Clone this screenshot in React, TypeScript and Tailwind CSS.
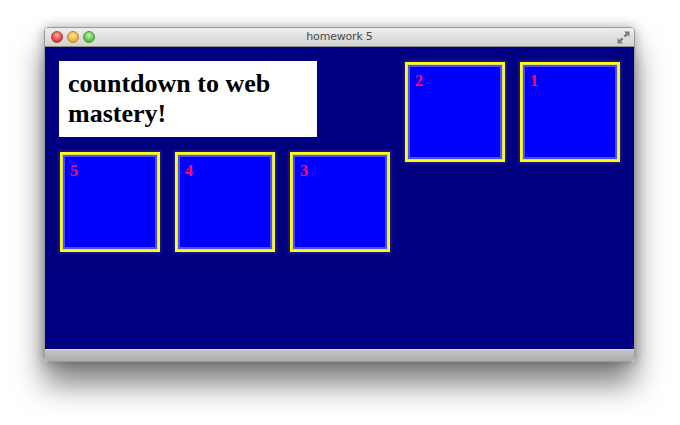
import React from "react";

function Box({ n }: { n: number }) {
  return (
    <div className="w-[100px] h-[100px] shrink-0 border-[2px] border-[#ffff00] bg-[#0000ff] shadow-[inset_0_0_0_1px_#e0e060,inset_0_0_0_3px_#4d4dff,0_0_2px_2px_rgba(40,40,150,0.55)] pl-[8px] pt-[4px]">
      <span className="text-[16px] leading-[18px] font-bold text-[#ff0a64] [font-family:'Liberation_Serif',serif]">
        {n}
      </span>
    </div>
  );
}

function Light({ cls }: { cls: string }) {
  return <div className={"w-[12px] h-[12px] rounded-full border " + cls} />;
}

export default function App() {
  return (
    <div className="w-[680px] h-[425px] bg-white pt-[27px] pl-[44px] overflow-hidden">
      <div className="w-[591px] h-[335px] flex flex-col rounded-[4px] border border-[#9a9a9a] shadow-[0_22px_30px_rgba(0,0,0,0.5),0_0_12px_rgba(0,0,0,0.3)] overflow-hidden">
        {/* title bar */}
        <div className="relative h-[19px] shrink-0 flex items-center bg-[linear-gradient(#eeeeee,#d2d2d2)] border-b border-[#8c8c8c]">
          <div className="flex items-center gap-[4px] pl-[6px]">
            <Light cls="border-[#b0403a] bg-[radial-gradient(circle_at_50%_35%,#ffb3a8,#e2453c_60%,#b52a22)]" />
            <Light cls="border-[#b8862a] bg-[radial-gradient(circle_at_50%_35%,#ffe3a0,#f3b437_60%,#c98a16)]" />
            <Light cls="border-[#4e9a3e] bg-[radial-gradient(circle_at_50%_35%,#c9f5b5,#5ec24a_60%,#3c9a2c)]" />
          </div>
          <div className="absolute inset-0 flex items-center justify-center text-[11px] text-[#4a4a4a] [font-family:'DejaVu_Sans',sans-serif] tracking-[-0.2px]">
            homework 5
          </div>
          <svg className="absolute right-[4px] top-[3px]" width="13" height="13" viewBox="0 0 12 12">
            <path d="M6.5 0.5h5v5L9.8 3.8 7.7 5.9 6.1 4.3 8.2 2.2z" fill="#7a7a7a" />
            <path d="M5.5 11.5h-5v-5l1.7 1.7 2.1-2.1 1.6 1.6-2.1 2.1z" fill="#7a7a7a" />
          </svg>
        </div>
        {/* content */}
        <div className="flex-1 bg-[#000080] pt-[14px] pl-[15px] flex items-start gap-[15px]">
          <div className="flex flex-col gap-[15px]">
            <div className="w-[258px] h-[76px] bg-white -ml-[1px] px-[9px] py-[8px] text-[26px] leading-[30px] font-bold text-black [font-family:'Liberation_Serif',serif]">
              countdown to web mastery!
            </div>
            <div className="flex gap-[15px]">
              <Box n={5} />
              <Box n={4} />
              <Box n={3} />
            </div>
          </div>
          <div className="flex gap-[15px] mt-[1px]">
            <Box n={2} />
            <Box n={1} />
          </div>
        </div>
        {/* bottom bar */}
        <div className="h-[12px] shrink-0 bg-[linear-gradient(#c4c4c4,#acacac)] border-t border-[#d6d6d6]" />
      </div>
    </div>
  );
}
